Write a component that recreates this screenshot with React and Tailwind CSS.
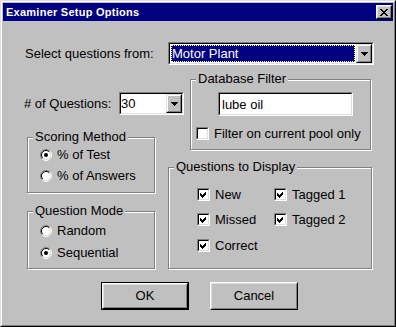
import React from 'react'

function Sunken({ className = '', children }) {
  return (
    <div className={`border border-t-[#808080] border-l-[#808080] border-r-white border-b-white ${className}`}>
      <div className="h-full border border-t-black border-l-black border-r-[#dfdfdf] border-b-[#dfdfdf]">{children}</div>
    </div>
  )
}

function Arrow() {
  return (
    <svg width="7" height="4" viewBox="0 0 7 4" shapeRendering="crispEdges">
      <rect x="0" y="0" width="7" height="1" fill="#000" />
      <rect x="1" y="1" width="5" height="1" fill="#000" />
      <rect x="2" y="2" width="3" height="1" fill="#000" />
      <rect x="3" y="3" width="1" height="1" fill="#000" />
    </svg>
  )
}

function DropBtn() {
  return (
    <div className="w-[16px] h-full shrink-0 bg-[#c0c0c0] border border-t-[#dfdfdf] border-l-[#dfdfdf] border-r-black border-b-black">
      <div className="h-full flex items-center justify-center border border-t-white border-l-white border-r-[#808080] border-b-[#808080]">
        <Arrow />
      </div>
    </div>
  )
}

function Combo({ className, children }) {
  return (
    <Sunken className={`${className} h-[23px] shrink-0`}>
      <div className="flex h-full bg-white">
        <div className="flex-1 flex">{children}</div>
        <DropBtn />
      </div>
    </Sunken>
  )
}

function Group({ label, className = '', children }) {
  return (
    <div className={`relative shrink-0 border border-[#808080] shadow-[1px_1px_0_#fff,inset_1px_1px_0_#fff] ${className}`}>
      <span className="absolute -top-[9px] left-[5px] bg-[#c0c0c0] px-[2px] leading-[15px]">{label}</span>
      {children}
    </div>
  )
}

function Radio({ checked, label }) {
  return (
    <div className="h-[16px] flex items-center gap-[5px]">
      <svg width="12" height="12" viewBox="0 0 12 12">
        <circle cx="6" cy="6" r="4.5" fill="#fff" />
        <path d="M9.9 2.1A5.5 5.5 0 0 0 2.1 9.9" stroke="#808080" fill="none" />
        <path d="M2.1 9.9A5.5 5.5 0 0 0 9.9 2.1" stroke="#fff" fill="none" />
        <path d="M9.2 2.8A4.5 4.5 0 0 0 2.8 9.2" stroke="#000" fill="none" />
        <path d="M2.8 9.2A4.5 4.5 0 0 0 9.2 2.8" stroke="#dfdfdf" fill="none" />
        {checked && <circle cx="6" cy="6" r="2" fill="#000" />}
      </svg>
      <span>{label}</span>
    </div>
  )
}

function Check({ checked, label }) {
  return (
    <div className="h-[13px] flex items-center gap-[5px]">
      <Sunken className="w-[13px] h-[13px] shrink-0">
        <div className="h-full bg-white">
          {checked && (
            <svg width="9" height="9" viewBox="0 0 9 9" shapeRendering="crispEdges">
              <path d="M1 3h1v1h1v1h1v-1h1v-1h1v-1h1v3h-1v1h-1v1h-1v1h-1v-1h-1v-1h-1z" fill="#000" />
            </svg>
          )}
        </div>
      </Sunken>
      <span className="whitespace-nowrap">{label}</span>
    </div>
  )
}

function Button({ label, isDefault }) {
  const inner = (
    <div className="h-full border border-t-white border-l-white border-r-black border-b-black">
      <div className="h-full flex items-center justify-center border border-t-[#dfdfdf] border-l-[#dfdfdf] border-r-[#808080] border-b-[#808080]">
        {label}
      </div>
    </div>
  )
  return isDefault ? (
    <div className="w-[88px] h-[28px] border border-black">{inner}</div>
  ) : (
    <div className="w-[88px] h-[28px]">{inner}</div>
  )
}

export default function App() {
  return (
    <div className="w-[396px] h-[327px] bg-[#c0c0c0] border border-t-[#dfdfdf] border-l-[#dfdfdf] border-r-black border-b-black font-['Liberation_Sans',Arial,sans-serif] text-[13px] text-black">
      <div className="h-full flex flex-col p-[1px] border border-t-white border-l-white border-r-[#808080] border-b-[#808080]">
        {/* title bar */}
        <div className="h-[18px] shrink-0 bg-[#000080] flex items-center justify-between">
          <span className="pl-[3px] text-white font-bold text-[11px] tracking-[0.25px] leading-[18px]">Examiner Setup Options</span>
          <div className="w-[16px] h-[14px] mr-[1px] bg-[#c0c0c0] border border-t-white border-l-white border-r-black border-b-black">
            <div className="h-full flex items-center justify-center border border-t-[#dfdfdf] border-l-[#dfdfdf] border-r-[#808080] border-b-[#808080]">
              <svg width="8" height="7" viewBox="0 0 8 7" shapeRendering="crispEdges">
                <path d="M0 0h2v1h1v1h2v-1h1v-1h2v1h-1v1h-1v1h-1v1h1v1h1v1h1v1h-2v-1h-1v-1h-2v1h-1v1h-2v-1h1v-1h1v-1h1v-1h-1v-1h-1v-1h-1z" fill="#000" />
              </svg>
            </div>
          </div>
        </div>

        {/* body */}
        <div className="flex-1 flex flex-col">
          <div className="mt-[21px] ml-[22px] h-[23px] flex items-center">
            <span className="w-[143px] shrink-0">Select questions from:</span>
            <Combo className="w-[206px]">
              <div className="flex-1 m-[1px] bg-[#000080] border border-dotted border-[#ffff80] text-white flex items-center leading-none">Motor Plant</div>
            </Combo>
          </div>

          <div className="mt-[14px] ml-[21px] flex">
            <div className="w-[144px] shrink-0 pt-[13px] flex flex-col">
              <div className="w-[160px] h-[23px] flex items-center">
                <span className="w-[95px] shrink-0"># of Questions:</span>
                <Combo className="w-[65px]">
                  <div className="flex-1 flex items-center leading-none">30</div>
                </Combo>
              </div>
              <Group label="Scoring Method" className="mt-[22px] ml-[3px] w-[128px] h-[56px] pt-[9px] pl-[12px] flex flex-col gap-[5px]">
                <Radio checked label="% of Test" />
                <Radio label="% of Answers" />
              </Group>
              <Group label="Question Mode" className="mt-[18px] ml-[3px] w-[128px] h-[58px] pt-[11px] pl-[12px] flex flex-col gap-[6px]">
                <Radio label="Random" />
                <Radio checked label="Sequential" />
              </Group>
            </div>

            <div className="flex flex-col">
              <Group label="Database Filter" className="ml-[22px] w-[181px] h-[71px] pt-[12px] flex flex-col">
                <Sunken className="ml-[27px] w-[135px] h-[24px]">
                  <div className="h-full bg-white pl-[2px] flex items-center leading-none">lube oil</div>
                </Sunken>
                <div className="mt-[11px] ml-[5px]">
                  <Check label="Filter on current pool only" />
                </div>
              </Group>
              <Group label="Questions to Display" className="mt-[17px] w-[204px] h-[102px] pt-[20px] pl-[28px] flex flex-col">
                <div className="flex">
                  <div className="w-[77px]"><Check checked label="New" /></div>
                  <Check checked label="Tagged 1" />
                </div>
                <div className="flex mt-[12px]">
                  <div className="w-[77px]"><Check checked label="Missed" /></div>
                  <Check checked label="Tagged 2" />
                </div>
                <div className="flex mt-[13px]">
                  <Check checked label="Correct" />
                </div>
              </Group>
            </div>
          </div>

          <div className="mt-[13px] ml-[98px] flex gap-[21px]">
            <Button isDefault label="OK" />
            <Button label="Cancel" />
          </div>
        </div>
      </div>
    </div>
  )
}
